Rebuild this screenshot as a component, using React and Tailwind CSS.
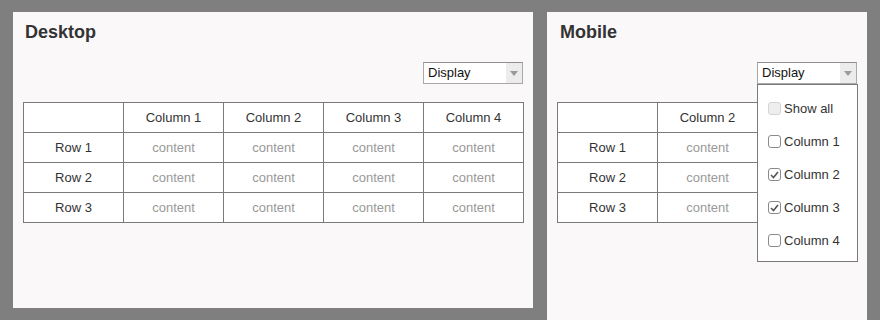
import { useState } from 'react'

const columns = ['Column 1', 'Column 2', 'Column 3', 'Column 4']
const rows = ['Row 1', 'Row 2', 'Row 3']

function Select({ children }) {
  return (
    <div className="relative w-[100px]">
      <div className="flex h-[22px] items-stretch border border-[#a9a9a9] border-t-[#8f8f8f] bg-white">
        <span className="flex-1 pl-[4px] text-[13px] leading-[20px] text-[#111]">Display</span>
        <span className="flex w-[16px] items-center justify-center bg-[#ececec]">
          <svg width="8" height="5" viewBox="0 0 8 5" aria-hidden="true">
            <path d="M0 0h8L4 5z" fill="#9a9a9a" />
          </svg>
        </span>
      </div>
      {children}
    </div>
  )
}

function Box({ checked, disabled }) {
  return (
    <span
      className={
        'flex h-[13px] w-[13px] items-center justify-center rounded-[3px] border ' +
        (disabled ? 'border-[#d4d4d4] bg-[#eeeeee]' : 'border-[#8a8a8a] bg-white')
      }
    >
      {checked && (
        <svg width="9" height="8" viewBox="0 0 9 8" aria-hidden="true">
          <path d="M1 4l2.5 2.5L8 1" fill="none" stroke="#555" strokeWidth="1.6" />
        </svg>
      )}
    </span>
  )
}

// cols: visible column names; hidden: extra columns that sit under the open menu (drawn empty)
function Table({ cols, hidden = 0 }) {
  const gridCols = cols.length + hidden === 4 ? 'grid-cols-[repeat(5,100px)] w-[501px]' : 'grid-cols-[repeat(3,100px)] w-[301px]'
  const cell = 'flex h-[30px] items-center justify-center border-b border-r border-[#7a7a7a]'
  const blanks = Array.from({ length: hidden }, (_, i) => i)
  return (
    <div className={'grid border-l border-t border-[#7a7a7a] bg-white text-[13px] ' + gridCols}>
      <div className={cell} />
      {cols.map((c) => (
        <div key={c} className={cell + ' text-[#333]'}>{c}</div>
      ))}
      {blanks.map((i) => <div key={'h' + i} className={cell} />)}
      {rows.map((r) => (
        <div key={r} className="contents">
          <div className={cell + ' text-[#333]'}>{r}</div>
          {cols.map((c) => (
            <div key={c} className={cell + ' text-[#999]'}>content</div>
          ))}
          {blanks.map((i) => <div key={'h' + i} className={cell} />)}
        </div>
      ))}
    </div>
  )
}

export default function App() {
  const [shown] = useState({ 'Column 1': false, 'Column 2': true, 'Column 3': true, 'Column 4': false })

  return (
    <div className="flex h-[320px] gap-[14px] overflow-hidden bg-[#7f7f7f] pl-[13px] pt-[12px] font-['Liberation_Sans',Arial,sans-serif]">
      {/* Desktop */}
      <div className="flex h-[296px] w-[520px] flex-col bg-[#faf8f9] px-[10px] pt-[10px]">
        <h2 className="pl-[2px] text-[18px] font-bold leading-[21px] text-[#333]">Desktop</h2>
        <div className="mt-[19px] flex justify-end">
          <Select />
        </div>
        <div className="mt-[18px]">
          <Table cols={columns} />
        </div>
      </div>

      {/* Mobile */}
      <div className="flex h-[320px] w-[320px] flex-col bg-[#faf8f9] px-[10px] pt-[10px]">
        <h2 className="pl-[3px] text-[18px] font-bold leading-[21px] text-[#333]">Mobile</h2>
        <div className="relative z-10 mt-[19px] flex justify-end">
          <Select>
            <div className="absolute left-0 top-full h-[178px] w-[101px] border border-[#7a7a7a] bg-white pl-[10px] pt-[7px]">
              <div className="flex h-[33px] items-center gap-[3px] text-[13px] text-[#333]">
                <Box disabled />
                <span>Show all</span>
              </div>
              {columns.map((c) => (
                <div key={c} className="flex h-[33px] items-center gap-[3px] text-[13px] text-[#333]">
                  <Box checked={shown[c]} />
                  <span>{c}</span>
                </div>
              ))}
            </div>
          </Select>
        </div>
        <div className="mt-[18px]">
          <Table cols={['Column 2']} hidden={1} />
        </div>
      </div>
    </div>
  )
}
